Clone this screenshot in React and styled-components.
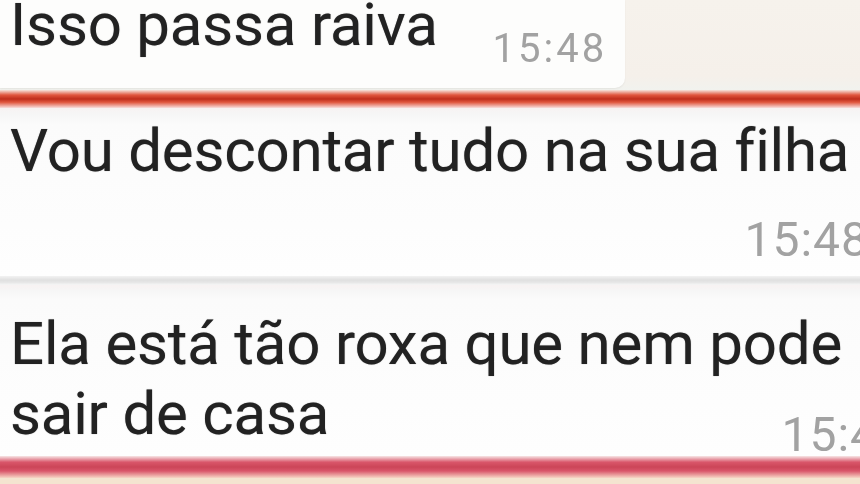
import React from 'react'
import styled, { createGlobalStyle } from 'styled-components'

const GlobalStyle = createGlobalStyle`
  html, body {
    margin: 0;
    padding: 0;
    background: #f4efe7;
  }
  body {
    font-family: Roboto, "Noto Sans", sans-serif;
    overflow: hidden;
  }
`

const Chat = styled.div`
  width: 860px;
  height: 484px;
  overflow: hidden;
  display: flex;
  flex-direction: column;
  background: #f4efe7;
  filter: blur(0.6px);
`

const TopRow = styled.div`
  height: 90px;
  flex-shrink: 0;
  display: flex;
  align-items: flex-start;
  background: linear-gradient(to bottom, #f6f2ec 0%, #f5f0ea 85%, #f1f2ee 100%);
`

const TopBubble = styled.div`
  width: 625px;
  height: 88px;
  box-sizing: border-box;
  padding-left: 10px;
  display: flex;
  align-items: flex-start;
  background: #fdfdfc;
  border-bottom-right-radius: 10px;
  box-shadow: 0 1px 2px rgba(0, 0, 0, 0.06);
`

const MessageText = styled.div`
  font-size: 60px;
  line-height: ${(p) => p.$lh || 70}px;
  color: #222;
  letter-spacing: -0.2px;
  text-shadow: 0 0 1px rgba(0, 0, 0, 0.45);
  white-space: nowrap;
`

const Time = styled.div`
  font-size: ${(p) => p.$size}px;
  line-height: ${(p) => p.$size}px;
  letter-spacing: 1px;
  color: #a2a2a2;
  white-space: nowrap;
`

const TopTime = styled(Time)`
  margin-left: 55px;
  margin-top: 29px;
  letter-spacing: 3px;
`

const RedLine = styled.div`
  height: ${(p) => p.$height}px;
  flex-shrink: 0;
  background: linear-gradient(
    to bottom,
    ${(p) => p.$fadeTop} 0%,
    ${(p) => p.$color} 28%,
    ${(p) => p.$dark} 50%,
    ${(p) => p.$color} 68%,
    ${(p) => p.$fadeBottom} 100%
  );
`

const Bubble = styled.div`
  flex-shrink: 0;
  display: flex;
  flex-direction: column;
  box-sizing: border-box;
  height: ${(p) => p.$height}px;
  padding: ${(p) => p.$pad}px 0 0 10px;
  background: linear-gradient(to bottom, #f7f2f2 0px, #f6f6f6 6px, #fbfbfb 16px, #fefefe 100%);
`

const BubbleTime = styled(Time)`
  align-self: flex-end;
  margin-top: ${(p) => p.$top}px;
  margin-right: ${(p) => p.$right}px;
`

const Separator = styled.div`
  height: 9px;
  flex-shrink: 0;
  background: linear-gradient(to bottom, #f2f2f2, #e0e0e0 45%, #e6e6e6 70%, #f6f6f6);
`

const BottomStrip = styled.div`
  flex: 1;
  background: #f4e4d0;
`

export default function App() {
  return (
    <>
      <GlobalStyle />
      <Chat>
        <TopRow>
          <TopBubble>
            <MessageText $lh={50}>Isso passa raiva</MessageText>
            <TopTime $size={40}>15:48</TopTime>
          </TopBubble>
        </TopRow>
        <RedLine
          $height={18}
          $fadeTop="#f6e4dc"
          $color="#e0563e"
          $dark="#bf2e1c"
          $fadeBottom="#f8dede"
        />
        <Bubble $height={168} $pad={13}>
          <MessageText $lh={60}>Vou descontar tudo na sua filha</MessageText>
          <BubbleTime $size={48} $top={35} $right={-9}>15:48</BubbleTime>
        </Bubble>
        <Separator />
        <Bubble $height={171} $pad={24}>
          <MessageText $lh={70}>
            Ela está tão roxa que nem pode
            <br />
            sair de casa
          </MessageText>
          <BubbleTime $size={48} $top={-38} $right={-46}>15:48</BubbleTime>
        </Bubble>
        <RedLine
          $height={22}
          $fadeTop="#f7e6e6"
          $color="#d9566a"
          $dark="#cc4558"
          $fadeBottom="#f7d6c6"
        />
        <BottomStrip />
      </Chat>
    </>
  )
}
